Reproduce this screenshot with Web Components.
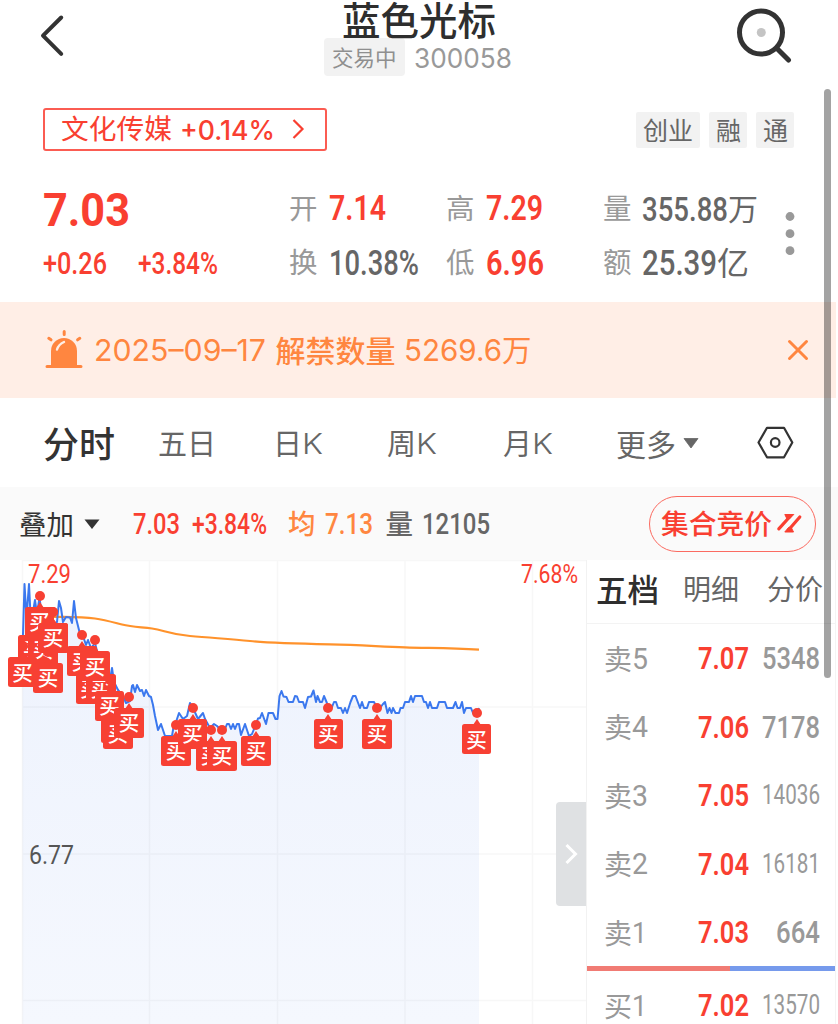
<!DOCTYPE html>
<html lang="zh-CN">
<head>
<meta charset="utf-8">
<title>蓝色光标 300058</title>
<style>
html,body{margin:0;padding:0;background:#fff;overflow:hidden}
body{width:838px;height:1024px;font-family:"Noto Sans CJK SC",sans-serif}
</style>
</head>
<body>
<stock-app></stock-app>
<script>
const FONTS = {
  cjk: '"Noto Sans CJK SC",sans-serif',
  din: 'Roboto,"Noto Sans CJK SC",sans-serif',
  sf: 'Inter,"Noto Sans CJK SC",sans-serif'
};
/* One line of text, condensed or stretched to an exact width. */
class FitText extends HTMLElement {
  connectedCallback() {
    if (this.shadowRoot) return;
    const g = n => this.getAttribute(n);
    const f = g('f') || 'cjk', s = +g('s'), w = +g('w');
    const dy = (f === 'cjk' ? 1 - 0.055 * s : f === 'sf' ? 1 : 0.6) + (+g('dy') || 0);
    this.attachShadow({mode: 'open'}).innerHTML = `<style>
      :host{display:block;flex:none;width:${w}px;height:${s}px;margin-left:${g('ml') || 0}px;font:${g('wt') || 400} ${s}px/${s}px ${FONTS[f]};color:${g('c') || 'inherit'}}
      span{display:inline-block;white-space:nowrap;transform-origin:0 50%;vertical-align:top}
      </style><span><slot></slot></span>`;
    const span = this.shadowRoot.querySelector('span');
    const k = w / (span.getBoundingClientRect().width || w);
    span.style.transform = `translateY(${dy}px) scaleX(${k})`;
  }
}
customElements.define('fit-text', FitText);

const define = (name, css, html) => customElements.define(name, class extends HTMLElement {
  connectedCallback() {
    if (!this.shadowRoot) this.attachShadow({mode: 'open'}).innerHTML =
      `<style>*{box-sizing:border-box}svg{display:block;flex:none}${css}</style>${typeof html === 'function' ? html(this) : html}`;
  }
});

define('app-header', `
  :host{display:flex;justify-content:space-between;height:84px;padding:0 46px 0 40px}
  .mid{flex:none;width:190px;margin-right:auto}
  .title{height:38px;display:flex;align-items:center}
  .sub{display:flex;align-items:center;height:38px}
  .tag{display:flex;align-items:center;width:81px;height:38px;border-radius:4px;background:#f2f2f2}
  .back{margin-right:224px}`, `
  <svg class="back" width="60" height="84" viewBox="40 0 60 84"><path d="M61.200 17.500 43 35.700l18.200 18.200" fill="none" stroke="#333" stroke-width="4" stroke-linecap="round" stroke-linejoin="round"/></svg>
  <div class="mid">
    <div class="title"><fit-text s="38.500" w="154" wt="500" ml="18" c="#2e2e2e" dy=".5">蓝色光标</fit-text></div>
    <div class="sub"><div class="tag"><fit-text s="21.500" w="64.500" ml="8" c="#8f8f8f">交易中</fit-text></div>
    <fit-text f="sf" s="26.500" w="98" ml="9" c="#999">300058</fit-text></div>
  </div>
  <svg width="56" height="84" viewBox="736 0 56 84"><circle cx="761" cy="32.500" r="21.500" fill="none" stroke="#333" stroke-width="5"/><path d="m777 48.500 11.500 11.500" stroke="#333" stroke-width="5" stroke-linecap="round"/><circle cx="761.300" cy="32.500" r="4.500" fill="#c4c4c4"/></svg>`);

define('sector-bar', `
  :host{display:flex;align-items:center;height:90px;padding:0 44px 0 43px;justify-content:space-between}
  .box{display:flex;align-items:center;width:284px;height:43px;border:2px solid #fb5c52;border-radius:3px;color:#f93f31}
  .tags{display:flex;gap:9px;margin-top:1px}
  .tags div{display:flex;justify-content:center;align-items:center;height:36px;width:38px;border-radius:2px;background:#f2f2f2;color:#666}
  .tags div:first-child{width:64px}
  svg{margin-left:16px}`, `
  <div class="box"><fit-text s="27.700" w="111" ml="15.500">文化传媒</fit-text><fit-text f="sf" s="26.500" w="95" ml="8" wt="500" dy="-.5">+0.14%</fit-text>
  <svg width="14" height="22" viewBox="0 0 14 22"><path d="m2.500 2 9 9-9 9" fill="none" stroke="#f93f31" stroke-width="2.200"/></svg></div>
  <div class="tags"><div><fit-text s="25" w="50">创业</fit-text></div><div><fit-text s="25" w="25">融</fit-text></div><div><fit-text s="25" w="25">通</fit-text></div></div>`);

define('quote-panel', `
  :host{display:grid;grid-template-columns:246px 157px 157px 170px 1fr;grid-template-rows:54px 54px;height:128px;padding:7px 0 0 43px;color:#999}
  .c{display:flex;align-items:center}
  svg{grid-column:5;grid-row:1/3;margin-left:-1px}
  .top{grid-row:1}`, `
  <div class="c top"><fit-text f="din" s="47" w="87" wt="700" c="#f93f31">7.03</fit-text></div>
  <div class="c top"><fit-text s="28.500" w="28.500">开</fit-text><fit-text f="din" s="35" w="57" ml="11.500" wt="600" c="#f93f31" dy="-.5">7.14</fit-text></div>
  <div class="c top"><fit-text s="28.500" w="28.500">高</fit-text><fit-text f="din" s="35" w="57" ml="11.500" wt="600" c="#f93f31" dy="-.5">7.29</fit-text></div>
  <div class="c top"><fit-text s="28.500" w="28.500">量</fit-text><fit-text f="din" s="34" w="86" ml="10.500" wt="500" c="#666">355.88</fit-text><fit-text s="30" w="30" c="#666">万</fit-text></div>
  <div class="c"><fit-text f="din" s="31" w="64" wt="500" ml="-.5" c="#f93f31">+0.26</fit-text><fit-text f="din" s="31" w="80" wt="500" ml="31.500" c="#f93f31">+3.84%</fit-text></div>
  <div class="c"><fit-text s="28.500" w="28.500">换</fit-text><fit-text f="din" s="35" w="90" ml="11.500" wt="500" c="#666">10.38%</fit-text></div>
  <div class="c"><fit-text s="28.500" w="28.500">低</fit-text><fit-text f="din" s="35" w="58" ml="11" wt="600" c="#f93f31">6.96</fit-text></div>
  <div class="c"><fit-text s="28.500" w="28.500">额</fit-text><fit-text f="din" s="35" w="75" ml="10.500" wt="500" c="#666">25.39</fit-text><fit-text s="32" w="32" c="#666">亿</fit-text></div>
  <svg width="40" height="108" viewBox="772 181 40 108" fill="#999"><circle cx="790" cy="216.500" r="4.400"/><circle cx="790" cy="233.700" r="4.400"/><circle cx="790" cy="250.700" r="4.400"/></svg>`);

define('notice-bar', `
  :host{display:flex;align-items:center;height:96px;background:#ffeee6;color:#ff8640;padding-left:44px;width:836px;box-sizing:border-box}
  .x{margin-left:auto;margin-right:26px}`, `
  <svg width="40" height="42" viewBox="44 328 40 42"><path d="M51 364.500V350a13 13 0 0 1 26 0v14.500z" fill="#ff8640"/><path d="M47 365.500h34M64.200 330.500v3M48.800 337.300l2.200 1.500M79.800 337.300l-2.200 1.500" stroke="#ff8640" stroke-width="3" stroke-linecap="round"/><path d="M57 348.500q1.500-5 7-7.500" fill="none" stroke="#ffeee6" stroke-width="2.400" stroke-linecap="round"/></svg>
  <fit-text f="sf" s="29.500" w="172" ml="10">2025–09–17</fit-text><fit-text s="30" w="120" ml="9.500" wt="500">解禁数量</fit-text><fit-text f="sf" s="29.500" w="98" ml="8">5269.6</fit-text><fit-text s="29.500" w="29.500">万</fit-text>
  <svg class="x" width="24" height="24" viewBox="0 0 24 24"><path d="m3.500 3.500 17 17m0-17-17 17" stroke="#ff8640" stroke-width="3" stroke-linecap="round"/></svg>`);

define('period-tabs', `
  :host{display:flex;align-items:center;height:89px;padding-left:43px;color:#666}`, `
  <fit-text s="36" w="72" wt="500" c="#333">分时</fit-text>
  <fit-text s="29" w="58" ml="43" dy=".5">五日</fit-text>
  <fit-text s="29" w="29" ml="57" dy=".5">日</fit-text><fit-text f="sf" s="29" w="21" wt="300">K</fit-text>
  <fit-text s="29" w="29" ml="64" dy=".5">周</fit-text><fit-text f="sf" s="29" w="21" wt="300">K</fit-text>
  <fit-text s="29" w="29" ml="66" dy=".5">月</fit-text><fit-text f="sf" s="29" w="21" wt="300">K</fit-text>
  <fit-text s="30" w="60" ml="63" dy=".5">更多</fit-text>
  <svg style="margin-left:7px" width="16" height="12" viewBox="0 0 16 12"><path d="M1 1.500h14L8 11z" fill="#666" stroke="#666" stroke-width=".8" stroke-linejoin="round"/></svg>
  <svg style="margin-left:57px" width="38" height="36" viewBox="756 425 38 36" fill="none" stroke="#333" stroke-width="2.200" stroke-linejoin="round"><path d="M758.500 442.500 767 427.800h17l8.300 14.700-8.300 14.800h-17z"/><circle cx="775.200" cy="442.500" r="4.300"/></svg>`);

define('info-bar', `
  :host{display:flex;align-items:center;height:73px;background:#fafafa;padding-left:19px}
  .btn{display:flex;align-items:center;width:167px;height:56px;border:1.500px solid #fa6a60;border-radius:28px;margin-left:159px;color:#f93f31}`, `
  <fit-text s="27.500" w="55" c="#333" dy="1">叠加</fit-text>
  <svg style="margin-left:9px" width="18" height="12" viewBox="0 0 18 12"><path d="M1.500 1.500h15L9 11z" fill="#333"/></svg>
  <fit-text f="din" s="29" w="47" wt="500" ml="31.500" c="#f93f31">7.03</fit-text>
  <fit-text f="din" s="29" w="75" wt="500" ml="12.500" c="#f93f31">+3.84%</fit-text>
  <fit-text s="27.500" w="27.500" wt="500" ml="21" c="#ff8640">均</fit-text>
  <fit-text f="din" s="29" w="48" wt="500" ml="9" c="#ff8640">7.13</fit-text>
  <fit-text s="27.500" w="27.500" wt="500" ml="13" c="#666">量</fit-text>
  <fit-text f="din" s="29" w="68" wt="500" ml="8.500" c="#666">12105</fit-text>
  <div class="btn"><fit-text s="27.800" w="111" wt="500" ml="11">集合竞价</fit-text>
  <svg style="margin-left:4px" width="28" height="22" viewBox="777 513 28 22"><path d="M779.800 528.800 791 516.500M800.800 517 789.500 530" stroke="#f93f31" stroke-width="3.200" stroke-linecap="round"/><path d="M785.800 514.500h9l-4.500 4.500-2 .500zM785.800 532h8.700l-2.500-5-2.500.500z" fill="#f93f31" stroke="#f93f31" stroke-linejoin="round"/></svg></div>`);

/* Buy marker: dot on the curve with a labelled flag beneath it. */
define('buy-mark', `
  :host{position:absolute;width:29.500px;height:46px}
  .d{width:10px;height:10px;border-radius:5px;background:#f74033;margin:0 auto 1px}
  .p{width:0;height:0;border:4.500px solid transparent;border-top:0;border-bottom:6px solid #f74033;margin:0 auto -1px}
  .b{width:29.500px;height:30px;border-radius:2.500px;background:#f74033;display:flex;align-items:center;justify-content:center;color:#fff}`,
  `<div class="d"></div><div class="p"></div><div class="b"><fit-text s="20.500" w="20.500" wt="500"><slot></slot></fit-text></div>`);

const PRICE = '22.5,640 23,634 24.5,584 26.500,618 29,584 31,625 33,612 35,600 37,615 39.5,597 42,618 46,620 50,610 54,625 57,622 59,601 61,608 63,622 66,617 70,617.500 72,623 74,601 76,618 78,626 80,634 83,636 86,645 88,640 91,648 95,643 98,655 104,660 108,672 110,680 112,668 114,682 118,690 123,696 126,703 130,701 132,686 133,685 135,692 137,685 140,691 142,690 144,696 146,690 149,696 151,697 153,705 155,716 158,730 161,724 165,736 172,736 174,724 176,722 179,713 183,719 187,716 190,703 193,708 198,719 203,713 205,719 210,728 214,724 217,726 221,730 225,729 227,724 229,724 231,729 233,724 235,729 237,724 239,724 241,735 245,724 249,736 252,734 256,724 258,718.500 260,718 262,713 266,724 268.500,713 273,713 275.500,719 277.500,719 279.500,696 281.500,691 283.500,696.500 286.500,697 288.500,702 293,702 295,696 297,696.500 299,702 303,702 305,708 308,697 311,696.500 313.500,690.500 316,702 317.500,696 320,702 322,702 324,696 326.500,702 328.500,707 332,707 334,702 336,702 338,708 341,708 343,713 345,708 347,713 350.500,702 353,696 355.500,696 360,708 362,702 364,708 367,708 369,702 374,702 377,708 380,708 383,704 385,702 387.500,713 389.500,708 391.500,713 393,708 395.500,713 399,713 400.500,708 403,708 405,702 409,702 411,696 413,702 415,696 422,696 424,702 426,702 428,708 430,702 432,708 437,708 439,702 445,702 447,708 453,708 455.500,702 457.500,708 460,708 462,702 464,713 466,708 471,708 473,713 477,713 479,708';
const MARKS = [[53,638],[82,661.500],[33,650],[43,650],[39.500,622],[53,638],[22.500,672.500],[48,678],[90.500,689],[101,689],[95,666.500],[116,728],[118,734],[109.500,706],[129,723],[176,751],[192.500,734],[211,756],[222,756],[256,751],[328.300,734],[377,734],[476.500,739.500]];
define('minute-chart', `
  :host{display:block;position:relative;width:586px;height:464px;overflow:hidden;flex:none}
  .lb{position:absolute}
  .handle{position:absolute;left:556px;top:242px;width:30px;height:104px;background:#dfe1e3;border-radius:4px 0 0 4px;display:flex;align-items:center;justify-content:center}`, `
  <svg width="586" height="464" viewBox="0 560 586 464">
    <defs><linearGradient id="fill" gradientUnits="userSpaceOnUse" x1="0" y1="584" x2="0" y2="1024"><stop offset="0" stop-color="#edf2fd"/><stop offset="1" stop-color="#f5f8fe"/></linearGradient></defs>
    <polygon points="22.5,1024 ${PRICE} 479,1024" fill="url(#fill)"/>
    <path d="M22.500 560V1024M149.500 560V1024M277.500 560V1024M405 560V1024M532.500 560V1024M22 560.500H586M22 707H586M22 854H586M22 1000.500H586" stroke="#000" stroke-opacity=".03" stroke-width="1.500"/>
    <path d="M50 617C75 616.500 85 617 95 618.500S112 622 122 624.500 140 627 152 628.500 168 634 190 636 230 639 250 641 300 643.700 330 644.300 380 646.500 405 647.300 450 648 479 649.700" fill="none" stroke="#ff922b" stroke-width="2.200"/>
    <polyline points="${PRICE}" fill="none" stroke="#3b78ee" stroke-width="2" stroke-linejoin="round"/>
  </svg>
  ${MARKS.map(([x, y]) => `<buy-mark style="left:${x - 14.75}px;top:${y - 560 - 31.5}px">买</buy-mark>`).join('')}
  <fit-text class="lb" style="left:27.500px;top:1px" f="din" s="25.500" w="43" wt="400" c="#f93f31">7.29</fit-text>
  <fit-text class="lb" style="left:520.500px;top:1px" f="din" s="25.500" w="57" wt="400" c="#f93f31">7.68%</fit-text>
  <fit-text class="lb" style="left:29px;top:282px" f="din" s="25" w="45" wt="400" c="#555">6.77</fit-text>
  <div class="handle"><svg width="16" height="22" viewBox="0 0 16 22"><path d="m3.500 2 9 9-9 9" fill="none" stroke="#fff" stroke-width="3"/></svg></div>`);

define('book-row', `:host{display:flex;align-items:center;height:68.500px;padding-left:17px;color:#999}`, el => {
  const [side, level, price, vol] = el.dataset.row.split(' ');
  const n = vol.length, small = n > 4, vw = n === 3 ? 44 : 58;
  return `<fit-text s="28" w="28" dy=".5">${side}</fit-text><fit-text f="din" s="30" w="${level === '1' ? 15 : 16}" dy=".5">${level}</fit-text>
  <fit-text f="din" s="31" w="51" wt="600" ml="${level === '1' ? 50.500 : 49.500}" c="#f93f31" dy=".5">${price}</fit-text>
  <fit-text f="din" s="${small ? 27 : 31}" w="${vw}" ml="${n === 3 ? 27.500 : 13}" wt="${small ? 400 : 500}" dy=".5">${vol}</fit-text>`;
});

define('order-book', `
  :host{display:block;width:250px;border-left:1.500px solid #f2f2f2;border-right:1.500px solid #f4f4f4;height:464px;overflow:hidden}
  .tabs{display:flex;align-items:center;height:63.500px;border-bottom:1.500px solid #f3f3f3;padding:0 0 5px 9px;color:#666}
  .bar{height:4.500px;display:flex;background:#769aec}
  .bar i{width:143px;background:#f17b74}`, `
  <div class="tabs"><fit-text s="31.500" w="63" wt="500" c="#2e2e2e" dy=".5">五档</fit-text><fit-text s="28" w="56" ml="24">明细</fit-text><fit-text s="28" w="56" ml="28">分价</fit-text></div>
  <book-row data-row="卖 5 7.07 5348"></book-row>
  <book-row data-row="卖 4 7.06 7178"></book-row>
  <book-row data-row="卖 3 7.05 14036"></book-row>
  <book-row data-row="卖 2 7.04 16181"></book-row>
  <book-row data-row="卖 1 7.03 664"></book-row>
  <div class="bar"><i></i></div>
  <book-row data-row="买 1 7.02 13570"></book-row>`);

define('stock-app', `
  :host{display:block;position:relative;width:838px;height:1024px;background:#fff;overflow:hidden}
  .main{display:flex}
  .scroll{position:absolute;left:824px;top:89px;width:6.500px;height:589px;border-radius:3.500px;background:rgba(0,0,0,.36)}`, `
  <app-header></app-header><sector-bar></sector-bar><quote-panel></quote-panel><notice-bar></notice-bar><period-tabs></period-tabs><info-bar></info-bar>
  <div class="main"><minute-chart></minute-chart><order-book></order-book></div><div class="scroll"></div>`);
</script>
</body>
</html>
